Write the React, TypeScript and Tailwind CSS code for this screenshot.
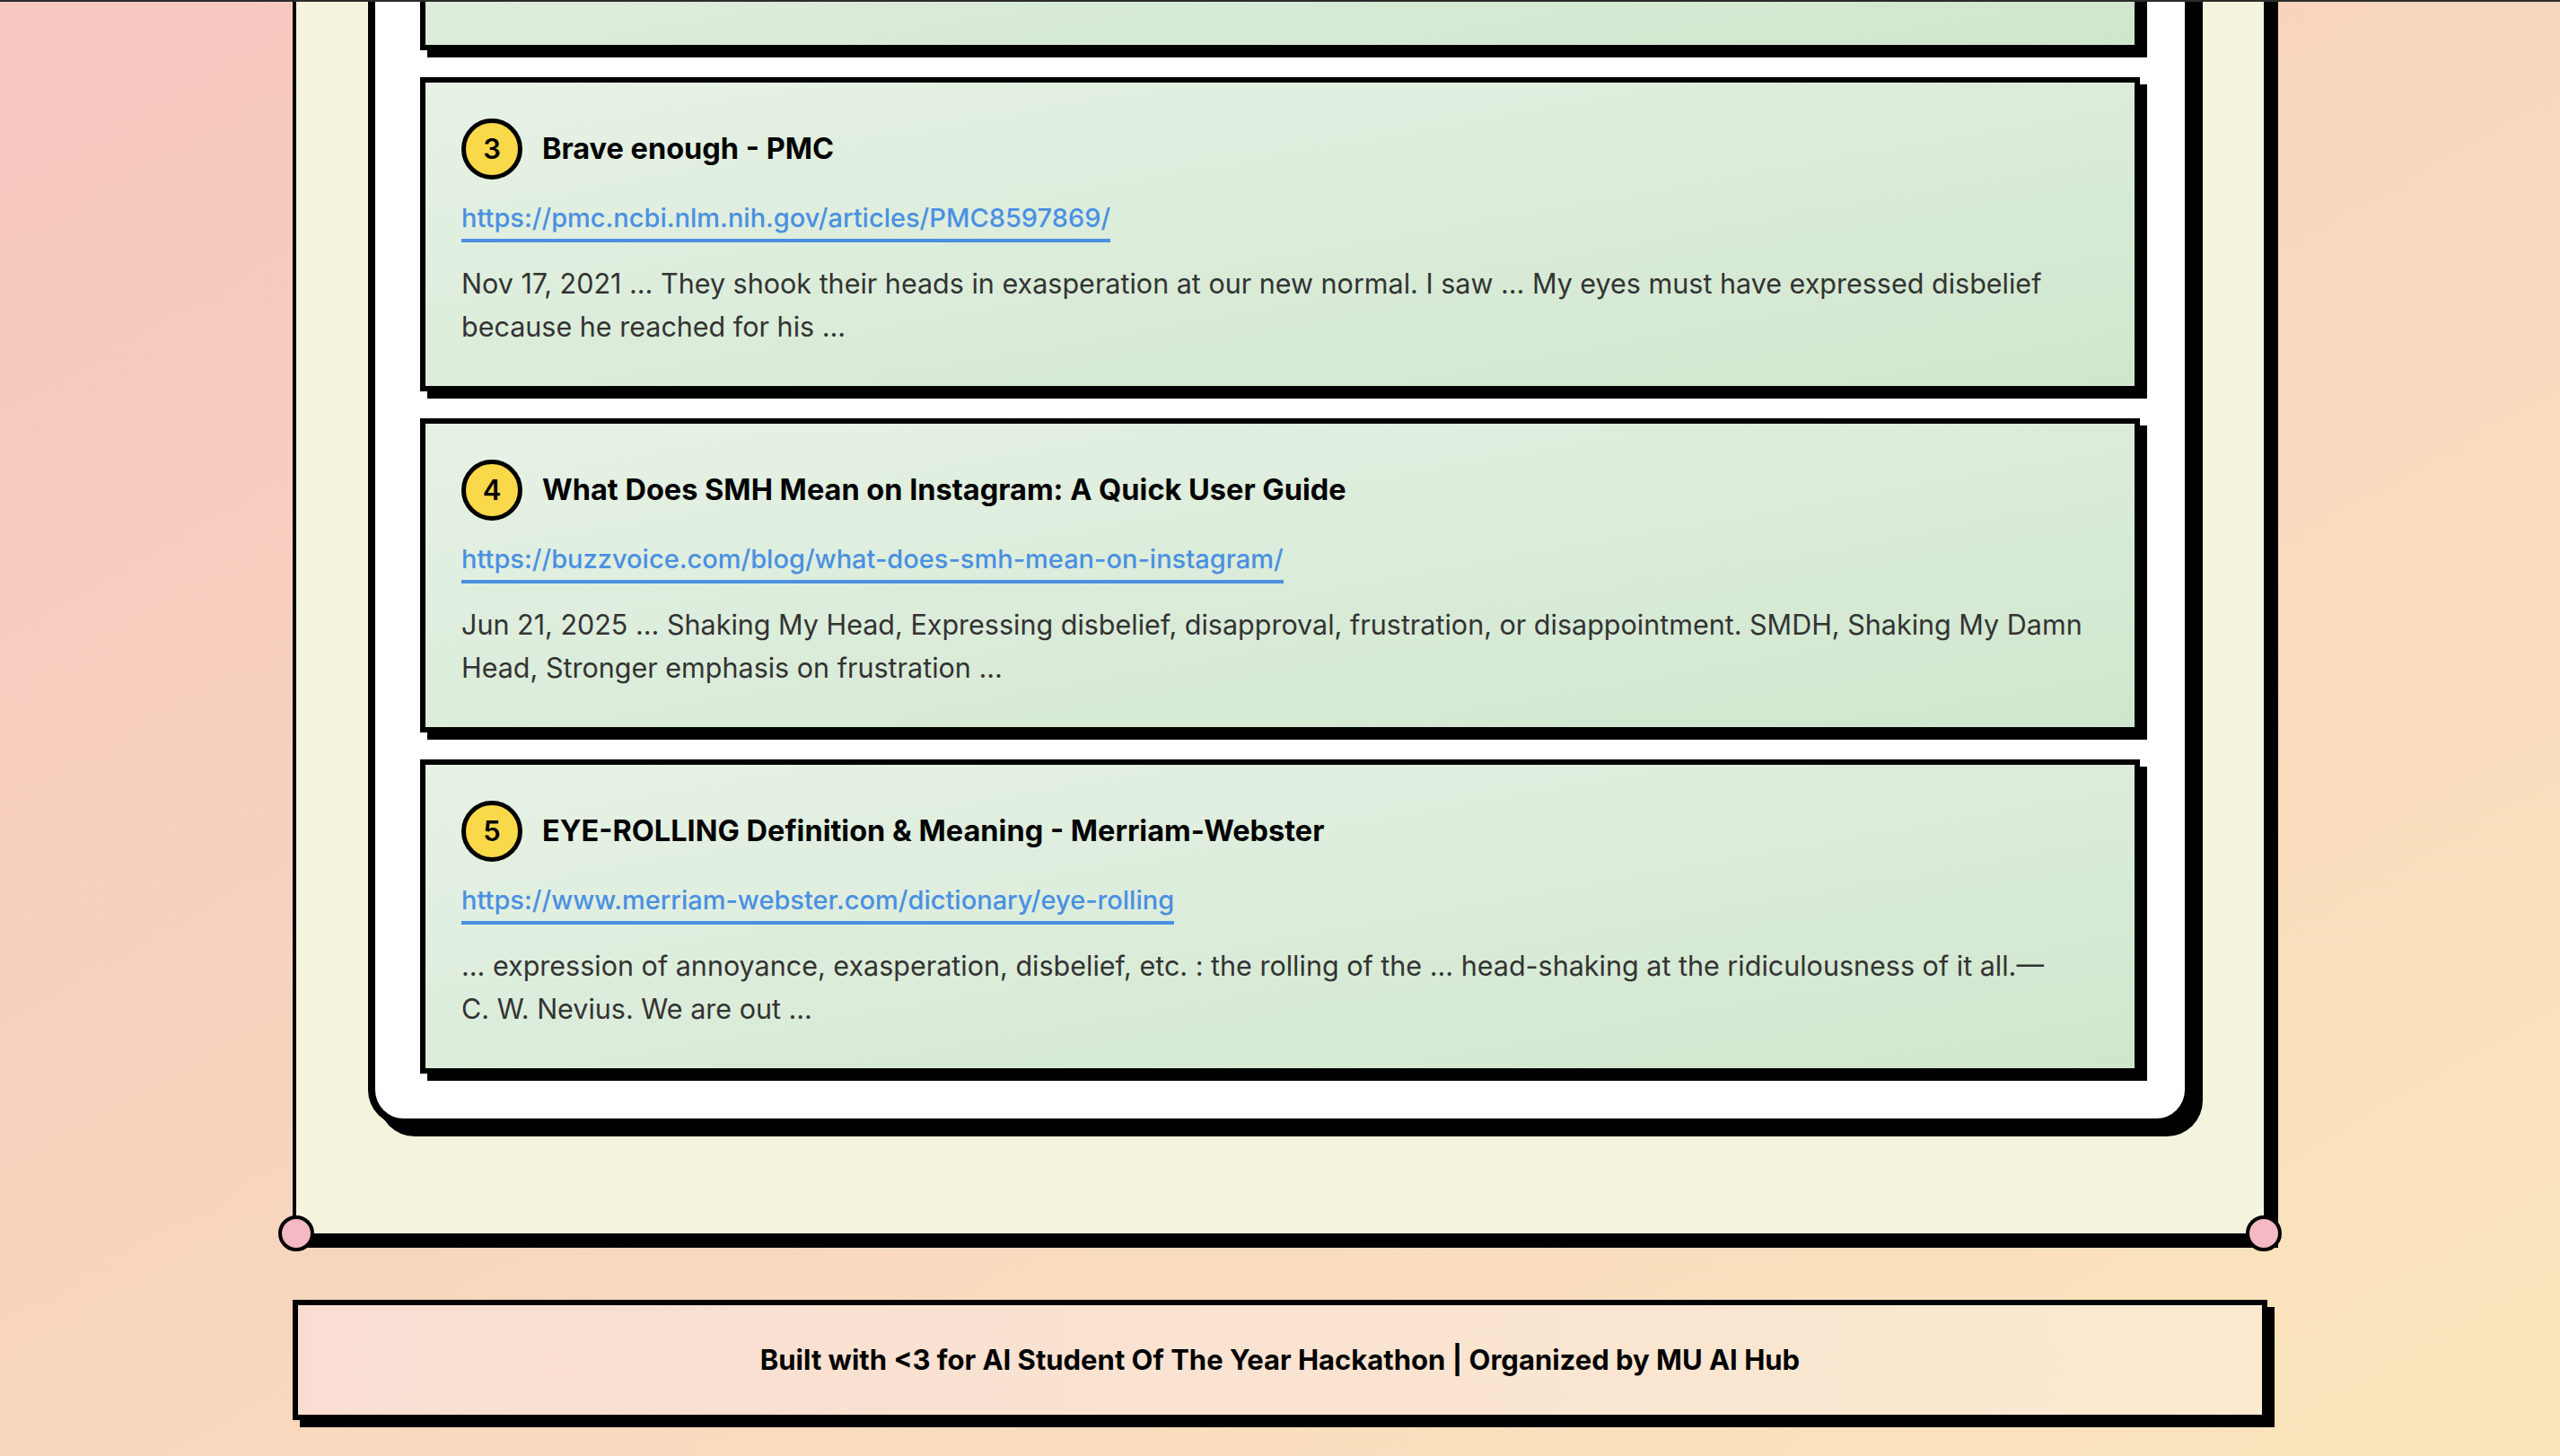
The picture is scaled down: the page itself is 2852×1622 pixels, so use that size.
import React from "react";

// Search results shown in the list (partial scroll position)
const results = [
  {
    id: 3,
    title: "Brave enough - PMC",
    url: "https://pmc.ncbi.nlm.nih.gov/articles/PMC8597869/",
    snippet:
      "Nov 17, 2021 ... They shook their heads in exasperation at our new normal. I saw ... My eyes must have expressed disbelief because he reached for his ...",
  },
  {
    id: 4,
    title: "What Does SMH Mean on Instagram: A Quick User Guide",
    url: "https://buzzvoice.com/blog/what-does-smh-mean-on-instagram/",
    snippet:
      "Jun 21, 2025 ... Shaking My Head, Expressing disbelief, disapproval, frustration, or disappointment. SMDH, Shaking My Damn Head, Stronger emphasis on frustration ...",
  },
  {
    id: 5,
    title: "EYE-ROLLING Definition & Meaning - Merriam-Webster",
    url: "https://www.merriam-webster.com/dictionary/eye-rolling",
    snippet:
      "... expression of annoyance, exasperation, disbelief, etc. : the rolling of the ... head-shaking at the ridiculousness of it all.— C.\u00a0W.\u00a0Nevius. We are out ...",
  },
];

function Pin({ className }: { className: string }) {
  return (
    <span
      className={`absolute w-[40px] h-[40px] rounded-full border-[4px] border-black bg-[#f4b9c3] ${className}`}
    />
  );
}

export default function App() {
  return (
    <div className="relative h-screen overflow-hidden bg-linear-to-br from-[#f6c6bf] to-[#fae6bc] font-['Inter',sans-serif]">
      {/* thin dark strip at the very top */}
      <div className="absolute top-0 inset-x-0 h-[2px] bg-[#2b2b2b] z-10" />

      <div className="w-[2200px] mx-auto -mt-[436px]">
        {/* main cream panel */}
        <div className="relative border-[4px] border-black bg-[#f4f3dd] shadow-[12px_12px_0_#000] px-[80px] pt-[80px] pb-[120px]">
          <Pin className="-left-[20px] -top-[20px]" />
          <Pin className="-right-[20px] -top-[20px]" />
          <Pin className="-left-[20px] -bottom-[20px]" />
          <Pin className="-right-[20px] -bottom-[20px]" />

          <div className="bg-white border-[8px] border-black rounded-[40px] shadow-[12px_12px_0_#000] p-[50px]">
            <div className="flex flex-col gap-[30px]">
              {/* previous result, scrolled mostly out of view */}
              <div className="h-[350px] border-[6px] border-black shadow-[8px_8px_0_#000] bg-linear-to-br from-[#e7f2e6] to-[#cfe6cd]" />

              {results.map((r) => (
                <div
                  key={r.id}
                  className="border-[6px] border-black shadow-[8px_8px_0_#000] bg-linear-to-br from-[#e7f2e6] to-[#cfe6cd] px-[40px] pt-[40px] pb-[42px]"
                >
                  <div className="flex items-center gap-[22px]">
                    <span className="w-[68px] h-[68px] shrink-0 rounded-full border-[5px] border-black bg-[#f9d84a] flex items-center justify-center text-[31px] font-semibold text-black">
                      {r.id}
                    </span>
                    <h3 className="text-[32.5px] leading-[40px] font-bold text-black">
                      {r.title}
                    </h3>
                  </div>
                  <div className="mt-[22px]">
                    <a
                      href={r.url}
                      className="inline-block text-[29px] leading-[42px] font-medium text-[#4a90e2] border-b-[4px] border-[#4a90e2] pb-[2px]"
                    >
                      {r.url}
                    </a>
                  </div>
                  <p className="mt-[22px] text-[30.5px] leading-[48px] text-[#333]">
                    {r.snippet}
                  </p>
                </div>
              ))}
            </div>
          </div>
        </div>

        {/* footer */}
        <div className="mt-[70px] h-[134px] border-[6px] border-black shadow-[8px_8px_0_#000] bg-linear-to-r from-[#f9ddd2] to-[#fbead0] flex items-center justify-center">
          <p className="text-[31px] font-bold text-black">
            Built with &lt;3 for AI Student Of The Year Hackathon | Organized by MU AI Hub
          </p>
        </div>
      </div>
    </div>
  );
}
